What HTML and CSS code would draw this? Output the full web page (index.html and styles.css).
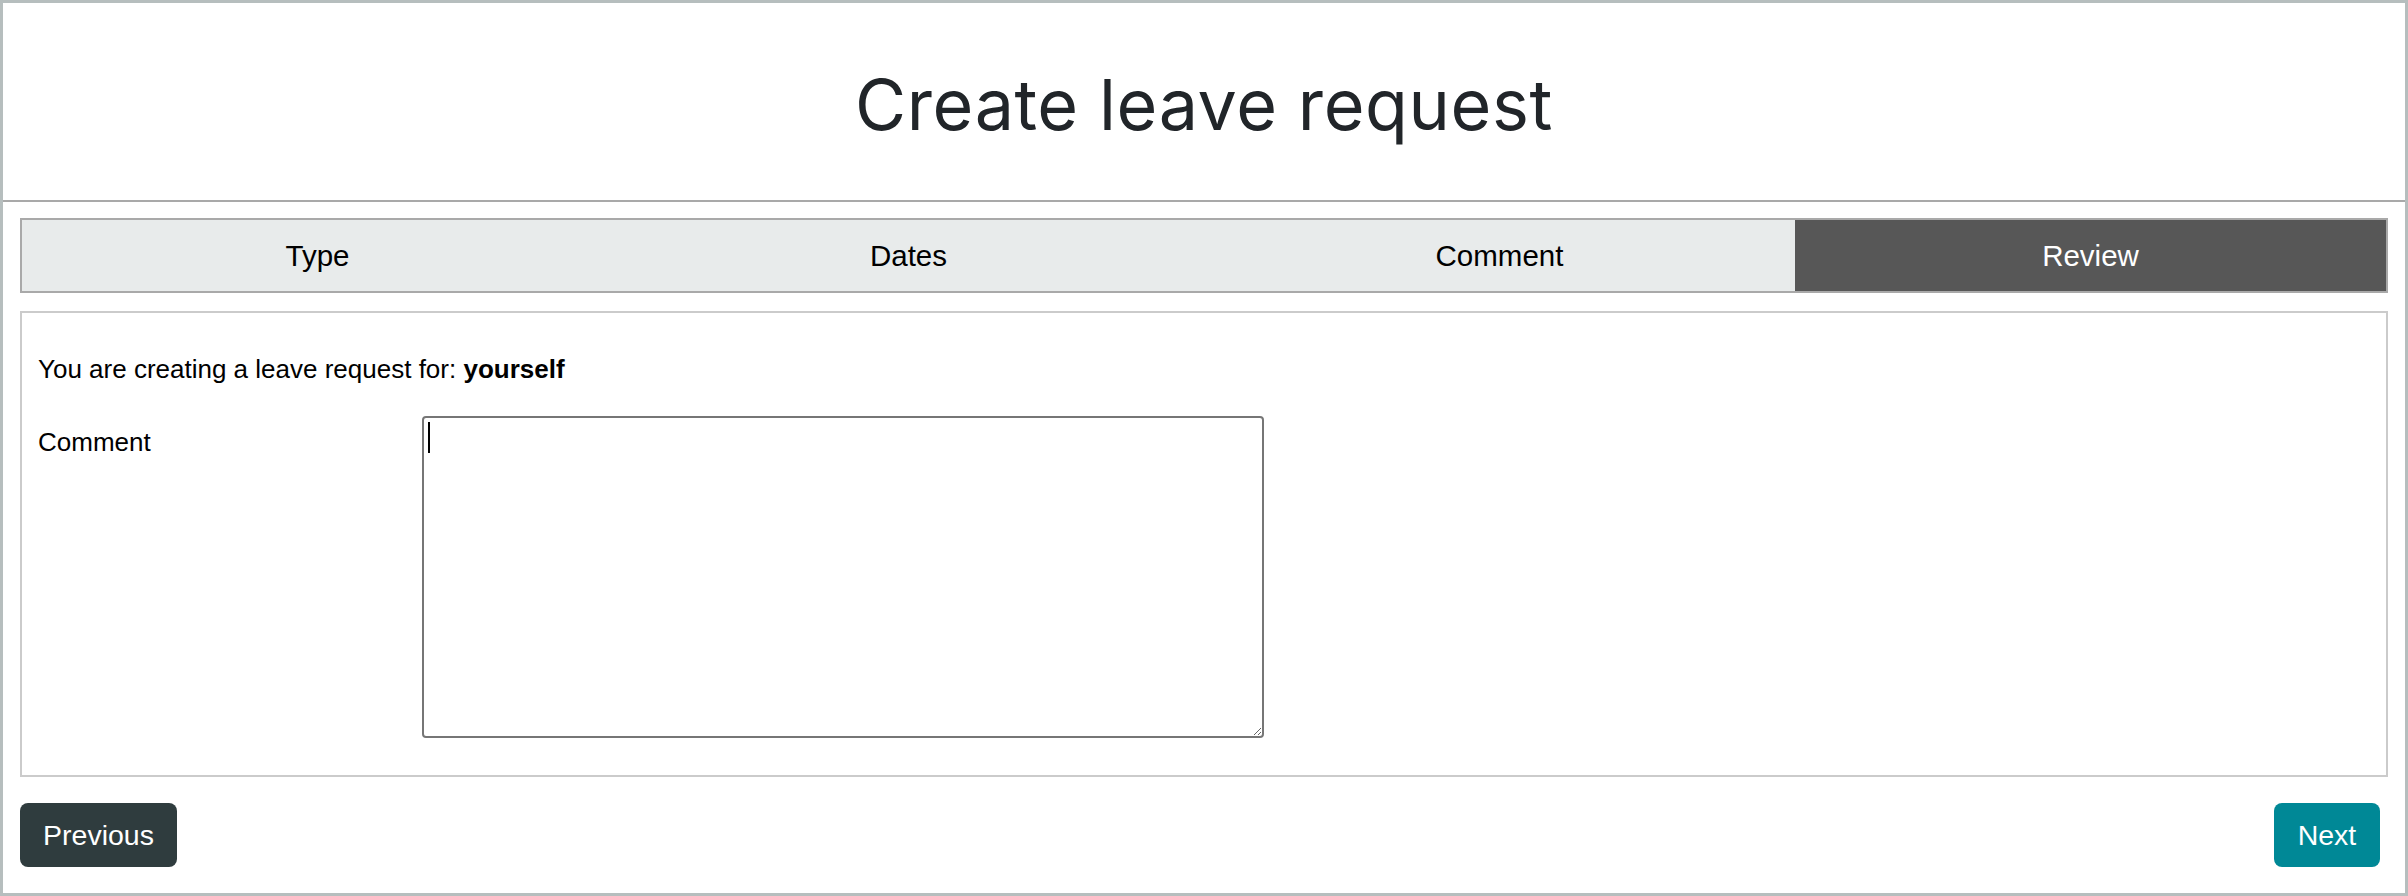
FILE: index.html
```html
<!DOCTYPE html>
<html lang="en">
<head>
<meta charset="utf-8">
<title>Create leave request</title>
<link rel="stylesheet" href="styles.css">
</head>
<body>
<div class="page">
  <header class="page-header">
    <h1 class="title">Create leave request</h1>
  </header>
  <main class="wizard">
    <nav class="steps">
      <div class="step">Type</div>
      <div class="step">Dates</div>
      <div class="step">Comment</div>
      <div class="step step-active">Review</div>
    </nav>
    <section class="panel">
      <p class="intro">You are creating a leave request for: <strong>yourself</strong></p>
      <div class="form-row">
        <label class="form-label" for="comment">Comment</label>
        <div class="field">
          <textarea id="comment" class="comment-input" autofocus></textarea>
          <span class="caret"></span>
        </div>
      </div>
    </section>
    <div class="actions">
      <button class="btn btn-prev" type="button">Previous</button>
      <button class="btn btn-next" type="button">Next</button>
    </div>
  </main>
</div>
</body>
</html>
```

FILE: styles.css
```css
html, body {
  margin: 0;
  padding: 0;
  background: #ffffff;
}

body {
  font-family: "Liberation Sans", Arial, sans-serif;
  color: #000;
}

.page {
  box-sizing: border-box;
  height: 896px;
  border: 3px solid #b6bebe;
  display: flex;
  flex-direction: column;
}

.page-header {
  box-sizing: border-box;
  height: 199px;
  border-bottom: 2px solid #a9a9a9;
  display: flex;
  align-items: center;
  justify-content: center;
  padding-top: 6px;
}

.title {
  margin: 0;
  font-family: "Inter", "DejaVu Sans", sans-serif;
  font-weight: 400;
  font-size: 70px;
  letter-spacing: 0.6px;
  color: #212529;
  line-height: 1;
}

.wizard {
  padding: 16px 17px 0 17px;
  display: flex;
  flex-direction: column;
}

.steps {
  box-sizing: border-box;
  height: 75px;
  border: 2px solid #a9a9a9;
  background: #e8ebeb;
  display: grid;
  grid-template-columns: repeat(4, 1fr);
}

.step {
  display: flex;
  align-items: center;
  justify-content: center;
  font-size: 29.5px;
  color: #000;
}

.step-active {
  background: #575757;
  color: #ffffff;
}

.panel {
  box-sizing: border-box;
  height: 466px;
  margin-top: 18px;
  border: 2px solid #cbcbcb;
  padding: 0 16px;
}

.intro {
  margin: 37px 0 0 0;
  font-size: 26px;
  line-height: 38px;
}

.intro strong {
  font-weight: 700;
}

.form-row {
  display: flex;
  margin-top: 28px;
}

.form-label {
  width: 384px;
  flex: none;
  font-size: 26px;
  line-height: 38px;
  padding-top: 7px;
}

.field {
  position: relative;
}

.comment-input {
  display: block;
  box-sizing: border-box;
  width: 842px;
  height: 322px;
  margin: 0;
  border: 2px solid #767676;
  border-radius: 4px;
  padding: 4px;
  font-family: "Liberation Sans", Arial, sans-serif;
  font-size: 26px;
  outline: none;
  resize: both;
  caret-color: transparent;
}

.caret {
  position: absolute;
  left: 6px;
  top: 6px;
  width: 2px;
  height: 31px;
  background: #000;
}

.actions {
  margin-top: 26px;
  display: flex;
  justify-content: space-between;
  align-items: center;
}

.btn {
  box-sizing: border-box;
  height: 64px;
  border: none;
  border-radius: 8px;
  color: #ffffff;
  font-family: "Liberation Sans", Arial, sans-serif;
  font-size: 28.5px;
  padding: 0;
  cursor: pointer;
}

.btn-prev {
  background: #2f3c3e;
  width: 157px;
}

.btn-next {
  background: #008896;
  width: 106px;
  margin-right: 8px;
}
```
